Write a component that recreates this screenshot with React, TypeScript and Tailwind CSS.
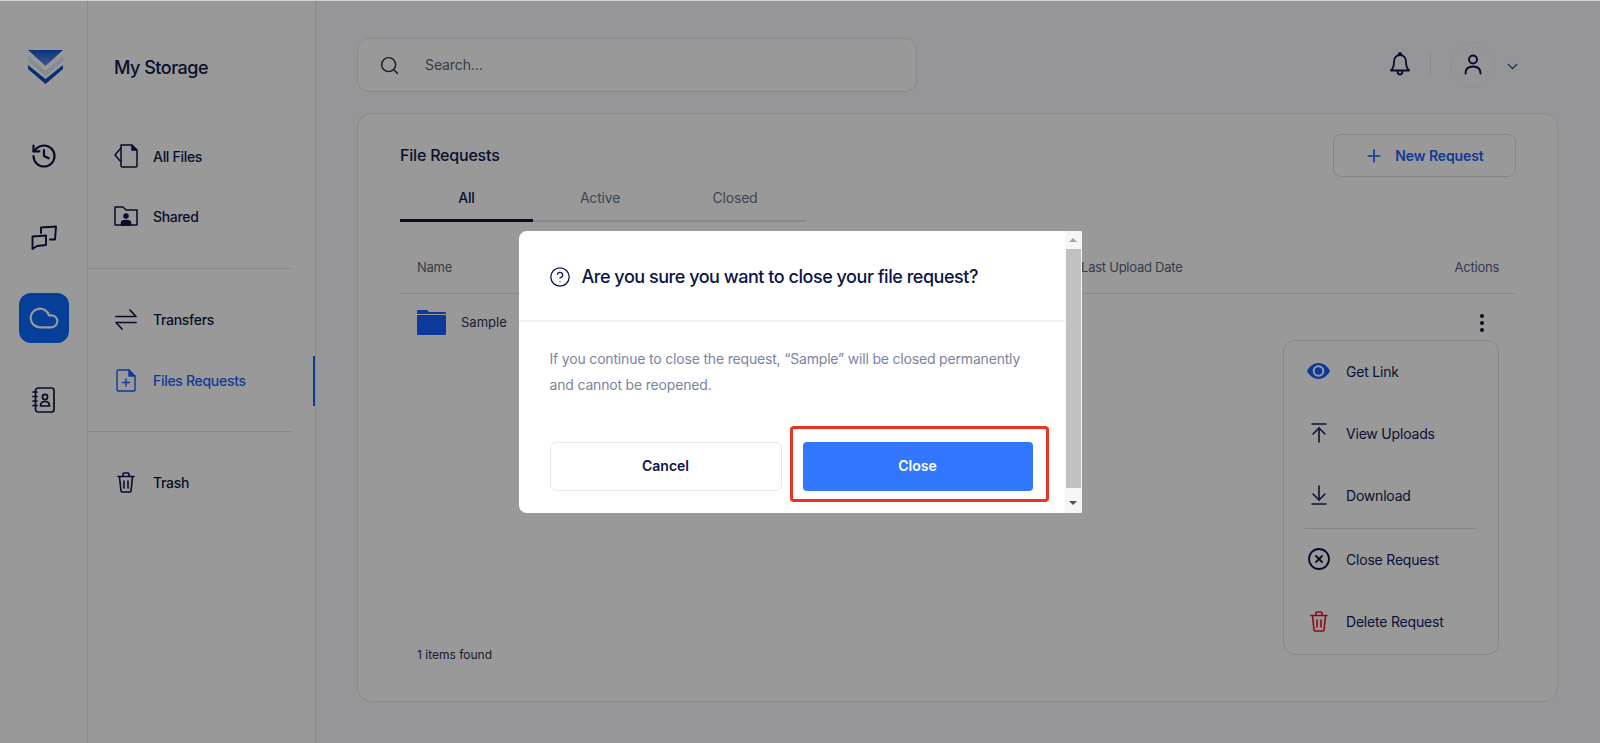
import React from "react";
import { History, Cloud, Search, ChevronDown, Plus, ArrowUpToLine, ArrowDownToLine, CircleX, CircleHelp } from "lucide-react";

const Logo = () => (
  <svg width="36" height="34" viewBox="0 0 36 34">
    <defs>
      <linearGradient id="lg" x1="0" y1="0" x2="0" y2="1">
        <stop offset="0" stopColor="#0f56d9" />
        <stop offset="1" stopColor="#6e93d6" />
      </linearGradient>
    </defs>
    <path d="M0 0H35L17.5 16Z" fill="url(#lg)" />
    <path d="M0 6L17.5 21L35 6V11L17.5 26L0 11Z" fill="#c4d2ea" opacity="0.55" />
    <path d="M0 15L17.5 29L35 15V19L17.5 34L0 19Z" fill="#0b4fc4" />
  </svg>
);

const Chat = () => (
  <svg width="26" height="25" viewBox="0 0 26 25" fill="none" stroke="#0a1446" strokeWidth="1.9" strokeLinejoin="round" strokeLinecap="round">
    <path d="M10 8V2.500L25 1.500L24 14.500H19" />
    <path d="M1.500 11.500L15 10.500V20L6 21L1.500 24Z" />
  </svg>
);

const Contacts = () => (
  <svg width="24" height="26" viewBox="0 0 24 26" fill="none" stroke="#0a1446" strokeWidth="1.7" strokeLinecap="round" strokeLinejoin="round">
    <rect x="3.5" y="1" width="18.5" height="24" rx="2.5" />
    <path d="M1 5H5M1 9.5H5M1 14H5M1 18.5H5" />
    <circle cx="13" cy="10" r="2.6" />
    <path d="M8.5 19c0-3 2-4.500 4.500-4.500s4.500 1.500 4.500 4.500Z" />
  </svg>
);

const AllFiles = () => (
  <svg width="24" height="24" viewBox="0 0 24 24" fill="none" stroke="#0a1446" strokeWidth="1.5" strokeLinejoin="round">
    <path d="M7 1H18L23 6V22a1 1 0 0 1-1 1H8a1 1 0 0 1-1-1Z" />
    <path d="M18 1V6H23" fill="#0a1446" />
    <path d="M7 4L1 11L7 18" />
  </svg>
);

const SharedFolder = () => (
  <svg width="24" height="20" viewBox="0 0 24 20" fill="none" stroke="#0a1446" strokeWidth="1.5" strokeLinejoin="round">
    <path d="M1 1H9L12 4H23V19H1Z" />
    <circle cx="12" cy="10" r="2" fill="#0a1446" />
    <path d="M7.500 19V16.500C7.500 15 9 14.500 12 14.500S16.500 15 16.500 16.500V19Z" fill="#0a1446" />
  </svg>
);

const Transfers = () => (
  <svg width="22" height="22" viewBox="0 0 22 22" fill="none" stroke="#0a1446" strokeWidth="1.7" strokeLinecap="round" strokeLinejoin="round">
    <path d="M1 8.500H21L15 2" />
    <path d="M21 14.500H1L7 21" />
  </svg>
);

const FileRequestIcon = () => (
  <svg width="20" height="23" viewBox="0 0 20 23" fill="none" stroke="#1a5fff" strokeWidth="1.4" strokeLinejoin="round" strokeLinecap="round">
    <path d="M2 1H13L19 7V21a1 1 0 0 1-1 1H2a1 1 0 0 1-1-1V2a1 1 0 0 1 1-1Z" />
    <path d="M13 1V7H19" fill="#1a5fff" />
    <path d="M10 10V17M6.500 13.500H13.500" />
  </svg>
);

const TrashIcon = ({ color }: { color: string }) => (
  <svg width="18" height="21" viewBox="0 0 18 21" fill="none" stroke={color} strokeWidth="1.6" strokeLinejoin="round" strokeLinecap="round">
    <path d="M1 4.500H17" />
    <path d="M6 4V2a1 1 0 0 1 1-1h4a1 1 0 0 1 1 1v2" />
    <path d="M2.500 5L4 19a1 1 0 0 0 1 1h8a1 1 0 0 0 1-1L15.500 5" />
    <path d="M7 9V16M11 9V16" />
  </svg>
);

const Folder = () => (
  <svg width="29" height="25" viewBox="0 0 29 25" fill="#1a5fff">
    <path d="M1 0H10L12 2H28a1 1 0 0 1 1 1V4H0V1a1 1 0 0 1 1-1Z" />
    <path d="M1 5H28a1 1 0 0 1 1 1V24a1 1 0 0 1-1 1H1a1 1 0 0 1-1-1V6a1 1 0 0 1 1-1Z" />
  </svg>
);

const Eye = () => (
  <svg width="23" height="16" viewBox="0 0 23 16">
    <path fillRule="evenodd" clipRule="evenodd" d="M11.500 0C17 0 21 4 23 8C21 12 17 16 11.500 16C6 16 2 12 0 8C2 4 6 0 11.500 0ZM11.500 2.300C8.300 2.300 5.700 4.800 5.700 8C5.700 11.200 8.300 13.700 11.500 13.700C14.700 13.700 17.300 11.200 17.300 8C17.300 4.800 14.700 2.300 11.500 2.300Z" fill="#1a5fff" />
    <circle cx="11.500" cy="8" r="3.800" fill="#1a5fff" />
  </svg>
);

const BellIcon = () => (
  <svg width="20" height="24" viewBox="0 0 20 24" fill="none" stroke="#0a1446" strokeWidth="1.8" strokeLinecap="round" strokeLinejoin="round">
    <path d="M10 3C5.500 3 4 6.500 4 10C4 14 3 16.500 1 18.500H19C17 16.500 16 14 16 10C16 6.500 14.500 3 10 3Z" />
    <path d="M7.500 19C7.500 21 8.500 22.500 10 22.500C11.500 22.500 12.500 21 12.500 19" />
    <circle cx="10" cy="2" r="1" fill="#0a1446" />
  </svg>
);

const Person = () => (
  <svg width="18" height="21" viewBox="0 0 18 21" fill="none" stroke="#0a1446" strokeWidth="1.9" strokeLinecap="round">
    <circle cx="9" cy="5.500" r="4" />
    <path d="M1.500 19.500C1.500 15 4.500 12.500 9 12.500C13.500 12.500 16.500 15 16.500 19.500" />
  </svg>
);

const NavRow = ({ icon, label, active }: { icon: React.ReactNode; label: string; active?: boolean }) => (
  <div className="relative flex h-[60px] items-center">
    <div className="flex w-[65px] justify-center pl-[10px]">{icon}</div>
    <span className={`text-[14px] font-medium tracking-[-0.3px] ${active ? "text-[#1a5fff]" : "text-[#0e1a4a]"}`}>{label}</span>
    {active && <div className="absolute right-0 top-[6px] h-[50px] w-[2px] bg-[#1a5fff]" />}
  </div>
);

const MenuRow = ({ icon, label }: { icon: React.ReactNode; label: string }) => (
  <div className="flex h-[62px] items-center">
    <div className="flex w-[62px] justify-center pl-[7px]">{icon}</div>
    <span className="text-[14px] tracking-[-0.2px] text-[#152058]">{label}</span>
  </div>
);

export default function App() {
  return (
    <div className="relative flex h-[743px] w-[1600px] overflow-hidden bg-[#fafbff] font-['Inter',sans-serif] text-[#0e1a4a]">
      {/* icon rail */}
      <aside className="flex w-[88px] shrink-0 flex-col items-center border-r border-[#e4e8f0] bg-white">
        <div className="mt-[50px] h-[34px] pl-[4px]"><Logo /></div>
        <div className="mt-[58px]"><History size={28} strokeWidth={1.9} color="#0a1446" /></div>
        <div className="mt-[55px]"><Chat /></div>
        <div className="mt-[43px] flex h-[50px] w-[50px] items-center justify-center rounded-[12px] bg-[#0b69ff]">
          <Cloud size={32} strokeWidth={1.6} color="#ffffff" />
        </div>
        <div className="mt-[44px]"><Contacts /></div>
      </aside>

      {/* secondary sidebar */}
      <aside className="w-[228px] shrink-0 border-r border-[#e4e8f0] bg-white">
        <div className="flex h-[126px] items-start pl-[26px] pt-[56px] text-[18px] font-medium leading-[24px] tracking-[-0.5px]">My Storage</div>
        <NavRow icon={<AllFiles />} label="All Files" />
        <NavRow icon={<SharedFolder />} label="Shared" />
        <div className="mb-[20px] mt-[22px] mr-[23px] border-t border-[#dfe4ed]" />
        <NavRow icon={<Transfers />} label="Transfers" />
        <div className="pt-px"><NavRow icon={<FileRequestIcon />} label="Files Requests" active /></div>
        <div className="mb-[20px] mt-[21px] mr-[23px] border-t border-[#dfe4ed]" />
        <NavRow icon={<TrashIcon color="#0a1446" />} label="Trash" />
      </aside>

      {/* main */}
      <main className="flex min-w-0 flex-1 flex-col pl-[41px] pr-[42px] pt-[38px]">
        <header className="flex h-[54px] shrink-0 items-center">
          <div className="flex h-[54px] w-[560px] items-center rounded-[12px] border border-[#e1e6f0] bg-white pl-[21px]">
            <Search size={21} strokeWidth={1.7} color="#2a3350" />
            <span className="ml-[25px] pb-[2px] text-[14px] tracking-[-0.1px] text-[#5a6480]">Search...</span>
          </div>
          <div className="ml-auto flex items-center pb-[2px] pr-[37px]">
            <BellIcon />
            <div className="ml-[20px] h-[22px] w-px bg-[#dfe4ed]" />
            <div className="ml-[19px] flex h-[45px] w-[45px] items-center justify-center rounded-full border border-[#eef0f5]">
              <Person />
            </div>
            <ChevronDown size={17} strokeWidth={1.8} color="#1a3a70" className="ml-[9px] mt-[5px]" />
          </div>
        </header>

        <section className="relative mt-[21px] flex h-[589px] flex-col rounded-[14px] border border-[#e1e6f0] bg-white pl-[42px] pr-[41px]">
          <div className="flex h-[86px] shrink-0 items-start justify-between">
            <div className="pt-[30px] text-[16px] font-medium leading-[22px] tracking-[-0.2px]">File Requests</div>
            <div className="mt-[20px] flex h-[43px] w-[183px] items-center justify-center rounded-[8px] border border-[#dce1ec] pr-[1px] text-[14px] font-semibold tracking-[-0.1px] text-[#1a5fff]">
              <Plus size={20} strokeWidth={2} className="mr-[11px]" />
              New Request
            </div>
          </div>

          <div className="flex h-[22px] w-[405px] shrink-0 border-b-2 border-[#e2e5ec]">
            <div className="h-[22px] w-[133px] border-b-[3px] border-[#0a1446]" />
          </div>

          <div className="absolute left-[42px] top-[72px] flex w-[405px] text-center text-[14px] leading-[24px] tracking-[-0.2px]">
            <span className="w-[133px] font-medium">All</span>
            <span className="w-[134px] text-[#6b7590]">Active</span>
            <span className="w-[136px] text-[#6b7590]">Closed</span>
          </div>

          <div className="mt-[27px] flex h-[45px] shrink-0 items-start border-b border-[#e2e5ec] px-[17px] text-[13px] leading-[20px] tracking-[-0.25px] text-[#5a6480]">
            <span className="mt-[8px]">Name</span>
            <span className="ml-[629px] mt-[8px]">Last Upload Date</span>
            <span className="ml-auto mt-[8px]">Actions</span>
          </div>

          <div className="flex h-[59px] shrink-0 items-center px-[17px] pb-[2px]">
            <Folder />
            <span className="ml-[15px] text-[13px] text-[#2a3350]">Sample</span>
            <div className="ml-auto mr-[-1px] flex flex-col items-center gap-[3px] pr-[16px]">
              <span className="h-[4px] w-[4px] rounded-full bg-[#0a1446]" />
              <span className="h-[4px] w-[4px] rounded-full bg-[#0a1446]" />
              <span className="h-[4px] w-[4px] rounded-full bg-[#0a1446]" />
            </div>
          </div>

          <div className="mt-auto pb-[36px] pl-[17px] text-[12px] leading-[20px] text-[#2a3350]">1 items found</div>

          {/* actions menu */}
          <div className="absolute right-[58px] top-[226px] w-[216px] rounded-[12px] border border-[#dce2ee] bg-white pb-[2px]">
            <div className="-mt-px pb-[2px]">
              <MenuRow icon={<Eye />} label="Get Link" />
              <MenuRow icon={<ArrowUpToLine size={24} strokeWidth={1.6} color="#152058" />} label="View Uploads" />
              <MenuRow icon={<ArrowDownToLine size={24} strokeWidth={1.6} color="#152058" />} label="Download" />
            </div>
            <div className="-mb-px ml-[21px] mr-[21px] border-t border-[#dce2ee]" />
            <MenuRow icon={<CircleX size={24} strokeWidth={1.8} color="#0a1446" />} label="Close Request" />
            <MenuRow icon={<TrashIcon color="#ee0f2c" />} label="Delete Request" />
          </div>
        </section>
      </main>

      {/* dim layer + dialog */}
      <div className="absolute inset-0 flex items-center justify-center bg-black/40">
        <div className="relative flex h-[282px] w-[563px] overflow-hidden rounded-l-[8px] rounded-r-[2px] bg-white">
          <div className="flex min-w-0 flex-1 flex-col">
            <div className="flex h-[91px] shrink-0 items-start border-b-2 border-[#eef1f6] pl-[30px] pt-[33px]">
              <CircleHelp size={22} strokeWidth={1.4} color="#0a1446" className="mt-[2px]" />
              <span className="ml-[11px] text-[18px] font-medium leading-[25px] tracking-[-0.47px] text-[#0a1446]">Are you sure you want to close your file request?</span>
            </div>
            <p className="mt-[24px] pl-[31px] pr-[32px] text-[14px] leading-[26px] tracking-[-0.18px] text-[#7c84a0]">
              If you continue to close the request, “Sample” will be closed permanently and cannot be reopened.
            </p>
            <div className="mt-[44px] flex gap-[21px] pl-[31px] pr-[32px]">
              <button className="h-[49px] flex-1 rounded-[6px] border border-[#e4e9f2] bg-white pb-px text-[14px] font-semibold text-[#0a1446]">Cancel</button>
              <button className="h-[49px] flex-1 rounded-[4px] bg-[#3177ff] pb-px text-[14px] font-semibold text-white">Close</button>
            </div>
          </div>
          <div className="flex w-[17px] shrink-0 flex-col items-center bg-[#f6f6f6]">
            <div className="mt-[7px] h-0 w-0 border-x-[4px] border-b-[4px] border-x-transparent border-b-[#a3a3a3]" />
            <div className="mt-[7px] h-[239px] w-[15px] bg-[#c1c1c1]" />
            <div className="mt-[13px] h-0 w-0 border-x-[4px] border-t-[4px] border-x-transparent border-t-[#505050]" />
          </div>
          {/* annotation */}
          <div className="absolute left-[271px] top-[195px] h-[76px] w-[259px] rounded-[4px] border-[3px] border-[#ea3323]" />
        </div>
      </div>

      <div className="absolute inset-x-0 top-0 h-px bg-[#d2d2d2]" />
    </div>
  );
}
